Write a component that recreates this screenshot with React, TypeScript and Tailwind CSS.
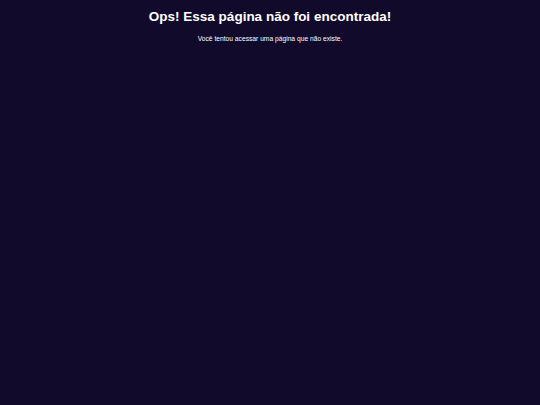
export default function App() {
  return (
    <div className="min-h-[405px] w-full bg-[#110a2b] text-white flex flex-col items-center pt-[9px]" style={{ fontFamily: '"Liberation Sans", Arial, sans-serif' }}>
      <h1 className="text-[13.5px] font-bold leading-[16px]">Ops! Essa página não foi encontrada!</h1>
      <p className="text-[6.7px] leading-[8px] mt-[10px]">Você tentou acessar uma página que não existe.</p>
    </div>
  );
}
